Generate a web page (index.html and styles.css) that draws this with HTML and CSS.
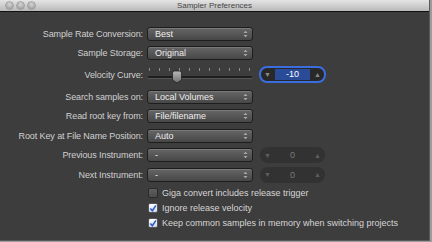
FILE: index.html
```html
<!DOCTYPE html>
<html>
<head>
    <meta charset="UTF-8">
    <title>Sampler Preferences</title>
    <link rel="stylesheet" href="styles.css">
</head>
<body>
    <div class="window">
        <div class="titlebar">
            <div class="lights"><span></span><span></span><span></span></div>
            <div class="title">Sampler Preferences</div>
        </div>
        <div class="content">
            <div class="row">
                <label>Sample Rate Conversion:</label>
                <div class="popup">Best<svg class="arrows" width="5" height="8" viewBox="0 0 5 8"><path d="M0.5 3 L2.5 0.8 L4.5 3 Z M0.5 5 L2.5 7.2 L4.5 5 Z"/></svg></div>
            </div>
            <div class="row">
                <label>Sample Storage:</label>
                <div class="popup">Original<svg class="arrows" width="5" height="8" viewBox="0 0 5 8"><path d="M0.5 3 L2.5 0.8 L4.5 3 Z M0.5 5 L2.5 7.2 L4.5 5 Z"/></svg></div>
            </div>
            <div class="row row-tall">
                <label>Velocity Curve:</label>
                <svg class="slider" width="106" height="24" viewBox="0 0 106 24">
                    <g stroke="#8a8a8a" stroke-width="1">
                        <path d="M2.5 5 V8 M12.5 5 V8 M22.5 5 V8 M32.5 5 V8 M42.5 5 V8 M52.5 5 V8 M62.5 5 V8 M72.5 5 V8 M82.5 5 V8 M92.5 5 V8 M102.5 5 V8"/>
                    </g>
                    <rect x="1" y="13" width="104" height="2" rx="1" fill="#1e1e1e"/>
                    <rect x="1" y="15" width="104" height="1" fill="#555"/>
                    <defs>
                        <linearGradient id="thumb" x1="0" y1="0" x2="0" y2="1">
                            <stop offset="0" stop-color="#b8b8b8"/>
                            <stop offset="1" stop-color="#6e6e6e"/>
                        </linearGradient>
                    </defs>
                    <path d="M25.5 10 Q25.5 8 27.5 8 H32.5 Q34.5 8 34.5 10 V17 L30 20 L25.5 17 Z" fill="url(#thumb)" stroke="#222" stroke-width="0.8"/>
                </svg>
                <div class="stepper active">
                    <span class="tri">&#9660;</span>
                    <span class="value">-10</span>
                    <span class="tri">&#9650;</span>
                </div>
            </div>
            <div class="row">
                <label>Search samples on:</label>
                <div class="popup">Local Volumes<svg class="arrows" width="5" height="8" viewBox="0 0 5 8"><path d="M0.5 3 L2.5 0.8 L4.5 3 Z M0.5 5 L2.5 7.2 L4.5 5 Z"/></svg></div>
            </div>
            <div class="row">
                <label>Read root key from:</label>
                <div class="popup">File/filename<svg class="arrows" width="5" height="8" viewBox="0 0 5 8"><path d="M0.5 3 L2.5 0.8 L4.5 3 Z M0.5 5 L2.5 7.2 L4.5 5 Z"/></svg></div>
            </div>
            <div class="row">
                <label>Root Key at File Name Position:</label>
                <div class="popup">Auto<svg class="arrows" width="5" height="8" viewBox="0 0 5 8"><path d="M0.5 3 L2.5 0.8 L4.5 3 Z M0.5 5 L2.5 7.2 L4.5 5 Z"/></svg></div>
            </div>
            <div class="row">
                <label>Previous Instrument:</label>
                <div class="popup">-<svg class="arrows" width="5" height="8" viewBox="0 0 5 8"><path d="M0.5 3 L2.5 0.8 L4.5 3 Z M0.5 5 L2.5 7.2 L4.5 5 Z"/></svg></div>
                <div class="stepper">
                    <span class="tri">&#9660;</span>
                    <span class="value">0</span>
                    <span class="tri">&#9650;</span>
                </div>
            </div>
            <div class="row">
                <label>Next Instrument:</label>
                <div class="popup">-<svg class="arrows" width="5" height="8" viewBox="0 0 5 8"><path d="M0.5 3 L2.5 0.8 L4.5 3 Z M0.5 5 L2.5 7.2 L4.5 5 Z"/></svg></div>
                <div class="stepper">
                    <span class="tri">&#9660;</span>
                    <span class="value">0</span>
                    <span class="tri">&#9650;</span>
                </div>
            </div>
            <div class="checks">
                <div class="check"><span class="box"></span>Giga convert includes release trigger</div>
                <div class="check"><span class="box on"><svg width="9" height="9" viewBox="0 0 9 9"><path d="M1.5 4.5 L3.8 7 L7.8 1" fill="none" stroke="#2f5bc4" stroke-width="1.8"/></svg></span>Ignore release velocity</div>
                <div class="check"><span class="box on"><svg width="9" height="9" viewBox="0 0 9 9"><path d="M1.5 4.5 L3.8 7 L7.8 1" fill="none" stroke="#2f5bc4" stroke-width="1.8"/></svg></span>Keep common samples in memory when switching projects</div>
            </div>
        </div>
    </div>
</body>
</html>
```

FILE: styles.css
```css
/* Sampler preferences window */
body {
    margin: 0;
    background-color: #9c9c9c;
    font-family: "Liberation Sans", Arial, sans-serif;
    font-size: 9px;
}

.window {
    width: 429px;
    height: 240px;
    background-color: #3d3d3d;
    border-right: 1px solid #5a5a5a;
    border-bottom: 1px solid #5a5a5a;
}

.titlebar {
    position: relative;
    height: 11px;
    background: linear-gradient(#e4e4e4, #b9b9b9);
    border-bottom: 1px solid #111;
}

.lights {
    display: flex;
    gap: 4px;
    padding: 2px 0 0 6px;
}

.lights span {
    width: 7px;
    height: 7px;
    border-radius: 50%;
    background: radial-gradient(circle at 50% 35%, #d6d6d6, #8e8e8e);
    box-shadow: 0 0 0 0.5px #7a7a7a;
}

.title {
    position: absolute;
    top: 0;
    left: 0;
    right: 0;
    text-align: center;
    font-size: 8px;
    line-height: 11px;
    color: #444;
}

.content {
    padding-top: 12px;
}

.row {
    display: flex;
    align-items: center;
    height: 19.5px;
}

.row:first-child,
.row:nth-child(2) {
    height: 19px;
}

.row-tall {
    height: 25px;
}

label {
    width: 143px;
    text-align: right;
    color: #d0d0d0;
    margin-right: 4px;
    letter-spacing: -0.1px;
}

.popup {
    display: flex;
    align-items: center;
    justify-content: space-between;
    box-sizing: border-box;
    width: 106px;
    height: 14px;
    padding: 0 4px 0 7px;
    border: 1px solid #1e1e1e;
    border-radius: 3px;
    background: linear-gradient(#666, #474747);
    box-shadow: inset 0 1px 0 #7a7a7a;
    color: #eee;
}

.arrows {
    fill: #aaa;
}

.slider {
    display: block;
}

.stepper {
    display: flex;
    align-items: center;
    justify-content: space-between;
    box-sizing: border-box;
    width: 65px;
    height: 16px;
    margin-left: 7px;
    padding: 0 4px;
    border-radius: 8px;
    background-color: #323232;
    color: #7a7a7a;
}

.stepper .tri {
    font-size: 7px;
    color: #5e5e5e;
}

.stepper .value {
    flex: 1;
    text-align: center;
}

.stepper.active {
    width: 67px;
    height: 17px;
    margin-left: 6px;
    border: 2px solid #3a6de0;
    background-color: #282828;
    padding: 0 3px;
}

.stepper.active .tri {
    color: #8a8a8a;
}

.stepper.active .value {
    margin: 0 4px;
    height: 11px;
    line-height: 11px;
    background-color: #2a4c98;
    color: #fff;
}

.checks {
    padding: 1px 0 0 148px;
}

.check {
    display: flex;
    align-items: center;
    height: 15px;
    color: #d6d6d6;
}

.box {
    display: flex;
    align-items: center;
    justify-content: center;
    box-sizing: border-box;
    width: 10px;
    height: 10px;
    margin-right: 4px;
    border-radius: 2px;
    background: linear-gradient(#5f5f5f, #4c4c4c);
    border: 1px solid #2a2a2a;
}

.box.on {
    background: linear-gradient(#ffffff, #cfd8ea);
    border-color: #555;
}
```
